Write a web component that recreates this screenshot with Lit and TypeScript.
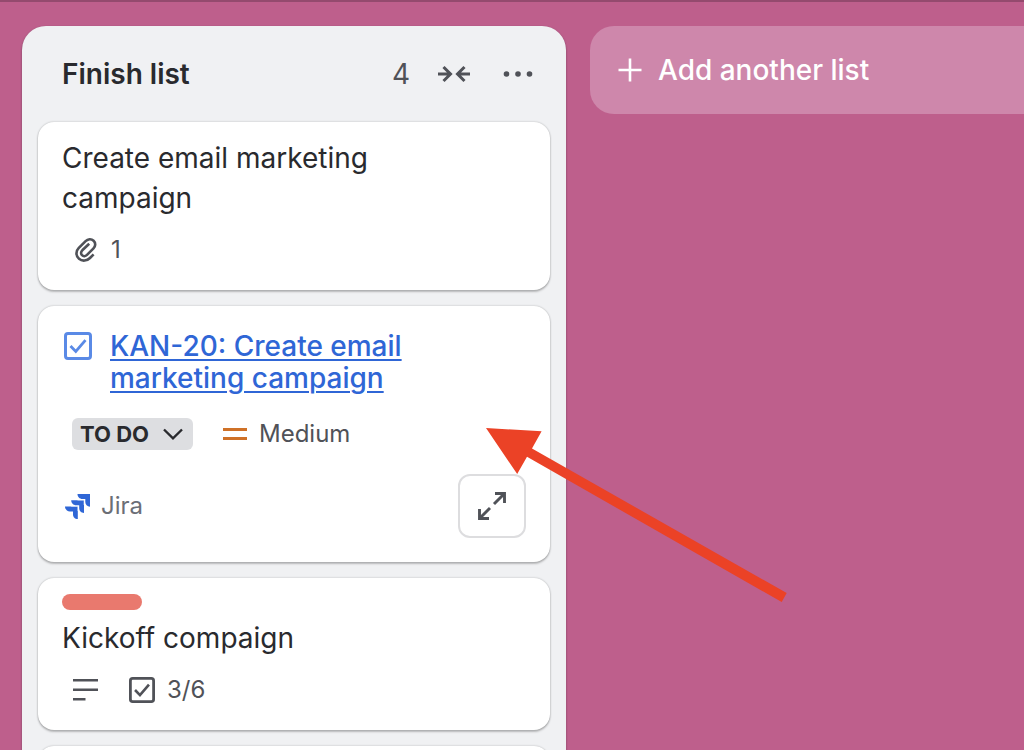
import { LitElement, html, css, svg } from "lit";
import { customElement } from "lit/decorators.js";

const checkbox = svg`
  <rect x="1.5" y="1.5" width="25" height="25" rx="2.5" fill="none" stroke="currentColor" stroke-width="3"/>
  <path d="M6.5 14 11.800 19.5 21.5 8.200" fill="none" stroke="currentColor" stroke-width="2.8"/>`;

@customElement("app-root")
export class AppRoot extends LitElement {
  static styles = css`
    :host {
      display: block;
      font-family: Inter, "Liberation Sans", sans-serif;
      font-size: 28px;
      line-height: 40px;
      color: #292a2e;
    }
    * { box-sizing: border-box; }
    h2, h3, p { margin: 0; font: inherit; }
    svg { display: block; flex: none; }
    button { font: inherit; color: inherit; border: 0; background: none; padding: 0; margin: 0; cursor: pointer; }
    .board {
      position: relative;
      height: 100vh;
      overflow: hidden;
      display: flex;
      align-items: flex-start;
      gap: 24px;
      padding: 24px 22px 0;
      background: #be5f8c;
      border-top: 2px solid #944a6e;
    }
    .list {
      flex: 0 0 544px;
      background: #f0f1f3;
      border-radius: 24px;
      padding: 16px;
      box-shadow: 0 1px 2px rgba(30, 31, 33, 0.5);
    }
    .list-head {
      display: flex;
      align-items: center;
      height: 64px;
      margin-bottom: 16px;
      padding: 0 12px 0 24px;
      color: #505258;
    }
    .list-head h2 { flex: 1; font-weight: 600; color: #292a2e; }
    .count { margin-right: 24px; }
    .head-btn { display: grid; place-items: center; width: 40px; height: 48px; }
    .more { margin-left: 24px; }
    .cards { display: flex; flex-direction: column; gap: 16px; }
    .card {
      background: #fff;
      border-radius: 16px;
      padding: 16px 24px 20px;
      box-shadow: 0 2px 2px rgba(30, 31, 33, 0.25), 0 0 2px rgba(30, 31, 33, 0.31);
    }
    .title { max-width: 400px; }
    .label { width: 80px; height: 16px; border-radius: 8px; background: #e9796e; margin-bottom: 8px; }
    .meta {
      display: flex;
      align-items: center;
      height: 40px;
      margin-top: 12px;
      padding-left: 11px;
      font-size: 24px;
      color: #505258;
    }
    .meta-item { display: flex; align-items: center; gap: 12px; margin-right: 30px; }
    .jira { padding: 24px; }
    .issue { display: flex; gap: 18px; line-height: 32px; color: #5a8ae6; padding-left: 2px; }
    .issue svg { margin-top: 2px; }
    .issue a {
      max-width: 340px;
      color: #2f66d6;
      font-weight: 500;
      text-decoration: underline;
      text-decoration-thickness: 2px;
      text-underline-offset: 3px;
    }
    .state { display: flex; align-items: center; height: 32px; margin: 24px 0 24px 10px; gap: 30px; font-size: 24px; color: #505258; }
    .status {
      display: flex;
      align-items: center;
      gap: 14px;
      height: 32px;
      padding: 0 10px 0 8px;
      border-radius: 6px;
      background: #dddee1;
      color: #292a2e;
      font-size: 22px;
      line-height: 32px;
      font-weight: 700;
    }
    .priority { display: flex; align-items: center; gap: 12px; }
    .foot { display: flex; align-items: center; justify-content: space-between; }
    .source { display: flex; align-items: center; gap: 10px; padding-left: 3px; font-size: 24px; color: #6b6e76; }
    .expand {
      display: grid;
      place-items: center;
      width: 68px;
      height: 64px;
      border: 2px solid #dddddf;
      border-radius: 12px;
      background: #fff;
      color: #505258;
    }
    .add {
      flex: 0 0 544px;
      display: flex;
      align-items: center;
      gap: 16px;
      height: 88px;
      padding: 0 28px;
      border-radius: 24px;
      background: #ce87ab;
      color: #fff;
      font-weight: 500;
    }
    .pointer { position: absolute; left: 486px; top: 426px; pointer-events: none; }
  `;

  render() {
    return html`
      <main class="board">
        <section class="list">
          <header class="list-head">
            <h2>Finish list</h2>
            <span class="count">4</span>
            <button class="head-btn" aria-label="Collapse list">
              <svg width="32" height="18" viewBox="0 0 32 18" fill="none" stroke="currentColor" stroke-width="3">
                <path d="M0 9H12M5.5 2 12.5 9 5.5 16M32 9H20M26.500 2 19.500 9 26.500 16"/>
              </svg>
            </button>
            <button class="head-btn more" aria-label="List actions">
              <svg width="30" height="6" viewBox="0 0 30 6" fill="currentColor">
                <circle cx="3.500" cy="3" r="2.800"/><circle cx="15" cy="3" r="2.800"/><circle cx="26.500" cy="3" r="2.800"/>
              </svg>
            </button>
          </header>
          <div class="cards">
            <article class="card">
              <h3 class="title">Create email marketing campaign</h3>
              <div class="meta">
                <span class="meta-item">
                  <svg width="26" height="26" viewBox="0 0 26 26" fill="none" stroke="currentColor" stroke-width="2.600" stroke-linecap="butt">
                    <path d="M20.600 17.400 17 21C14 24 9.300 24.600 6 21.800 2.600 18.900 2.800 14 5.600 11.200L12.600 4.200C14.800 2 18.300 1.600 20.600 3.800 22.900 6 22.600 9.300 20.500 11.400L14 17.900C12.600 19.300 10.400 19.600 9 18.200 7.600 16.800 7.900 14.700 9.300 13.300L16.200 6.800"/>
                  </svg>
                  <span>1</span>
                </span>
              </div>
            </article>
            <article class="card jira">
              <div class="issue">
                <svg width="28" height="28" viewBox="0 0 28 28">${checkbox}</svg>
                <a href="#kan-20">KAN-20: Create email marketing campaign</a>
              </div>
              <div class="state">
                <button class="status">TO DO
                  <svg width="20" height="12" viewBox="0 0 20 12" fill="none" stroke="currentColor" stroke-width="2.400"><path d="M1 1.500 10 10.300 19 1.500"/></svg>
                </button>
                <span class="priority">
                  <svg width="24" height="14" viewBox="0 0 24 14" fill="#cf7127"><path d="M0 1H24V4H0ZM0 10H24V13H0Z"/></svg>
                  Medium
                </span>
              </div>
              <div class="foot">
                <span class="source">
                  <svg width="26" height="28" viewBox="0 -2 26 28" fill="#2f66d6">
                    <path d="M12.500 0H25V12.700C22.300 12.700 20.300 10.700 20.300 8V5H17.500C14.500 5 12.500 2.800 12.500 0Z"/>
                    <path d="M6.200 6.200H19V18.900C16.300 18.900 14.200 16.900 14.200 14.200V11.200H11.200C8.300 11.200 6.200 9 6.200 6.200Z"/>
                    <path d="M0 12.400H12.800V25.100C10.100 25.100 8 23.100 8 20.400V17.400H5C2 17.400 0 15.200 0 12.400Z"/>
                    <path d="M12.500 6.200H19V11M6.200 12.400H12.800V17" fill="none" stroke="#fff" stroke-width="0.500"/>
                  </svg>
                  Jira
                </span>
                <button class="expand" aria-label="Expand">
                  <svg width="28" height="28" viewBox="0 0 28 28" fill="none" stroke="currentColor" stroke-width="2.900">
                    <path d="M16 12 26 2M17 1.500H26.500V11M12 16 2 26M1.500 17V26.500H11"/>
                  </svg>
                </button>
              </div>
            </article>
            <article class="card">
              <div class="label"></div>
              <h3 class="title">Kickoff compaign</h3>
              <div class="meta">
                <span class="meta-item">
                  <svg width="26" height="22" viewBox="0 0 26 22" fill="currentColor"><path d="M0 0H25V2.600H0ZM0 9.500H25V12.100H0ZM0 19H12.500V21.600H0Z"/></svg>
                </span>
                <span class="meta-item">
                  <svg width="26" height="26" viewBox="0 0 28 28">${checkbox}</svg>
                  <span>3/6</span>
                </span>
              </div>
            </article>
            <article class="card">
              <div class="label"></div>
            </article>
          </div>
        </section>
        <button class="add">
          <svg width="24" height="24" viewBox="0 0 24 24" fill="none" stroke="currentColor" stroke-width="2.600"><path d="M12 0.500V23.500M0.500 12H23.500"/></svg>
          Add another list
        </button>
        <svg class="pointer" width="302" height="178" viewBox="486 428 302 178" fill="#eb4226" aria-hidden="true">
          <path d="M486 428 541.600 431.200 532 448.600 786.700 593 781.700 602 527 456.800 517.200 474Z"/>
        </svg>
      </main>
    `;
  }
}
